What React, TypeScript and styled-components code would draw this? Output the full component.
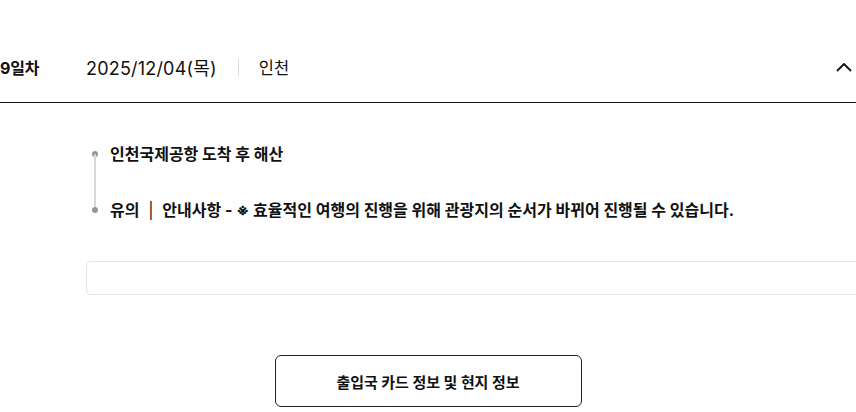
import styled, { createGlobalStyle } from "styled-components";

const GlobalStyle = createGlobalStyle`
  html, body {
    margin: 0;
    padding: 0;
    background: #fff;
    overflow: hidden;
  }
  body {
    font-family: Inter, "Noto Sans CJK KR", sans-serif;
    color: #111;
  }
`;

const App = () => {
  return (
    <>
      <GlobalStyle />
      <Page>
        <DayHeader>
          <DayLabel>9일차</DayLabel>
          <DateText>2025/12/04(목)</DateText>
          <Divider />
          <City>인천</City>
          <Toggle aria-label="접기">
            <svg width="16" height="10" viewBox="0 0 16 10" fill="none">
              <path
                d="M1.5 8.5L8 2L14.5 8.5"
                stroke="#111"
                strokeWidth="1.8"
                strokeLinecap="round"
                strokeLinejoin="round"
              />
            </svg>
          </Toggle>
        </DayHeader>
        <Body>
          <Timeline>
            <Stop last={false}>인천국제공항 도착 후 해산</Stop>
            <Stop last>
              유의 <Bar>|</Bar> 안내사항 - ※ 효율적인 여행의 진행을 위해
              관광지의 순서가 바뀌어 진행될 수 있습니다.
            </Stop>
          </Timeline>
          <EmptyBox />
          <ButtonRow>
            <InfoButton>출입국 카드 정보 및 현지 정보</InfoButton>
          </ButtonRow>
        </Body>
      </Page>
    </>
  );
};

const Page = styled.div`
  width: 856px;
  padding-top: 31px;
`;

const DayHeader = styled.div`
  display: flex;
  align-items: center;
  height: 71px;
  border-bottom: 1px solid #111;
`;

const DayLabel = styled.div`
  width: 86px;
  font-size: 16px;
  font-weight: 700;
  letter-spacing: -0.2px;
`;

const DateText = styled.div`
  font-size: 18px;
  font-weight: 400;
  letter-spacing: 0.2px;
`;

const Divider = styled.span`
  width: 1px;
  height: 18px;
  background: #dcdcdc;
  margin: 0 20px 0 21px;
`;

const City = styled.div`
  font-size: 16.5px;
`;

const Toggle = styled.button`
  margin-left: auto;
  margin-right: 4px;
  border: none;
  background: none;
  padding: 0;
  display: flex;
  align-items: center;
  cursor: pointer;
`;

const Body = styled.div`
  padding-left: 86px;
`;

const Timeline = styled.ul`
  list-style: none;
  margin: 0;
  padding: 38px 0 0 0;
`;

const Stop = styled.li<{ last: boolean }>`
  position: relative;
  padding-left: 24px;
  height: ${(props) => (props.last ? "26px" : "56px")};
  line-height: 26px;
  font-size: 16px;
  font-weight: 700;
  letter-spacing: 0;
  color: #111;

  &::before {
    content: "";
    position: absolute;
    left: 6px;
    top: 10px;
    width: 6px;
    height: 6px;
    border-radius: 50%;
    background: #8e9995;
  }

  &::after {
    content: "";
    display: ${(props) => (props.last ? "none" : "block")};
    position: absolute;
    left: 8px;
    top: 13px;
    width: 2px;
    height: 56px;
    background: #d3d9d7;
  }
`;

const Bar = styled.span`
  font-weight: 400;
  margin: 0 5px;
`;

const EmptyBox = styled.div`
  margin-top: 38px;
  height: 32px;
  width: 790px;
  border: 1px solid #e3e3e3;
  border-radius: 5px;
`;

const ButtonRow = styled.div`
  display: flex;
  justify-content: center;
  margin-left: -86px;
  margin-top: 60px;
`;

const InfoButton = styled.button`
  width: 307px;
  height: 52px;
  background: #fff;
  border: 1px solid #222;
  border-radius: 6px;
  font-family: Inter, "Noto Sans CJK KR", sans-serif;
  font-size: 15px;
  font-weight: 600;
  color: #111;
  letter-spacing: -0.1px;
  cursor: pointer;
`;

export default App;
